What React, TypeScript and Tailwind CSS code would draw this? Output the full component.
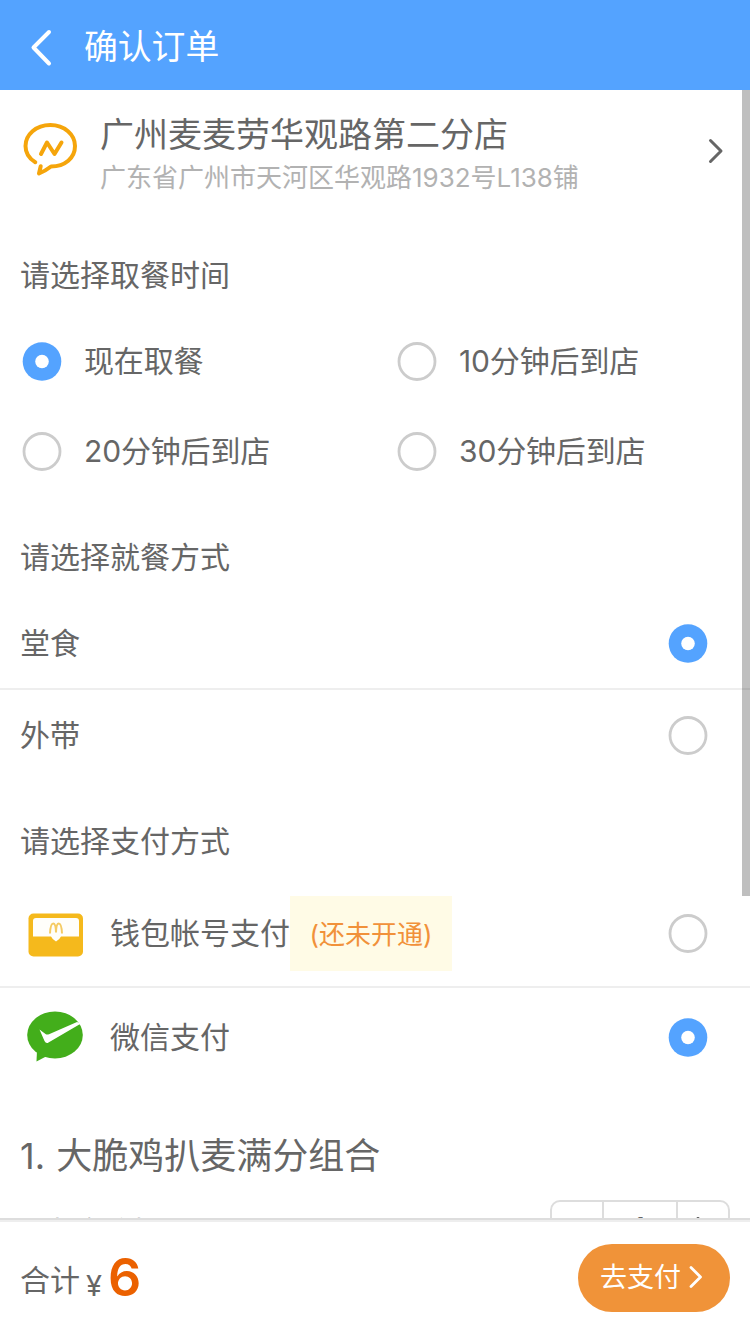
import React from "react";

function Radio({ checked = false }: { checked?: boolean }) {
  return (
    <svg width="40" height="40" viewBox="0 0 40 40" className="shrink-0">
      {checked ? (
        <>
          <circle cx="20" cy="20.500" r="19.3" fill="#54a3ff" />
          <circle cx="20" cy="20.500" r="6.8" fill="#fff" />
        </>
      ) : (
        <circle cx="20" cy="20.500" r="18" fill="#fff" stroke="#ccc" strokeWidth="2.800" />
      )}
    </svg>
  );
}

function SectionTitle({ children, className }: { children: React.ReactNode; className: string }) {
  return <h2 className={`px-5 text-[30px] leading-[40px] ${className}`}>{children}</h2>;
}

function TimeOption({ label, checked }: { label: string; checked?: boolean }) {
  return (
    <div className="flex h-[90px] w-[375px] items-center pl-[22px]">
      <Radio checked={checked} />
      <span className="ml-[22px] text-[30px] leading-[40px] tracking-[-0.150px]">{label}</span>
    </div>
  );
}

function WalletIcon() {
  return (
    <svg width="56" height="44" viewBox="0 0 56 44" className="mt-[3px]">
      <rect x="0.5" y="0.5" width="54.5" height="43" rx="5" fill="#f5b91c" />
      <path d="M5 8Q5 5 8 5H48Q51 5 51 8V23.500H33Q32 26 28 28.500Q24 26 23 23.500H5Z" fill="#fffefa" />
      <path d="M22 20.500Q22.500 10.500 25.200 10.500Q27.800 10.500 28 19.500Q28.200 10.500 30.800 10.500Q33.500 10.500 34 20.500" fill="none" stroke="#f5cb63" strokeWidth="2" />
    </svg>
  );
}

function WechatPayIcon() {
  return (
    <svg width="58" height="52" viewBox="0 0 58 52">
      <ellipse cx="28" cy="24" rx="27.800" ry="23.500" fill="#43ae1b" />
      <path d="M10 39L9.500 50.500L20 45Z" fill="#43ae1b" />
      <path d="M12.500 18.500L18.500 23Q20 24 22 23.200L50 11L54 12.500L21.500 31.500Q19 33 17.500 30Z" fill="#fff" />
    </svg>
  );
}

export default function App() {
  return (
    <div className="relative flex h-[1334px] w-[750px] flex-col overflow-hidden bg-white font-['Inter','Noto_Sans_CJK_SC',sans-serif] text-[#666]">
      <header className="flex h-[90px] shrink-0 items-center bg-[#54a3ff] pl-[30px] text-white">
        <svg width="24" height="38" viewBox="0 0 24 38" fill="none" stroke="currentColor" strokeWidth="4" strokeLinecap="round" strokeLinejoin="round" className="mt-[5px]">
          <path d="M19 3L3.500 18.500L19 34.500" />
        </svg>
        <h1 className="ml-[30px] mt-[4px] text-[33.800px] leading-[44px]">确认订单</h1>
      </header>

      <main className="h-[1128px] overflow-hidden">
        <section className="flex h-[120px]">
          <svg width="56" height="56" viewBox="0 0 56 56" fill="none" stroke="#f5a50b" strokeWidth="4" strokeLinecap="round" strokeLinejoin="round" className="ml-[22px] mt-[32px]">
            <path d="M13.300 40.200C7 36.500 3.500 30.500 3.500 24C3.500 12.500 14 3 28.300 3C42.500 3 53 12.500 53 24C53 36 43 44.500 29 44.500Q24 48.500 17 51.500L18.700 44.200" />
            <path d="M19 32L25 20.500L32.500 32L39.500 20.500" />
          </svg>
          <div className="ml-[22px] mt-[24px] flex-1">
            <h2 className="text-[34px] leading-[42px]">广州麦麦劳华观路第二分店</h2>
            <p className="pt-px text-[26px] leading-[42px] text-[#b2b2b2]">广东省广州市天河区华观路1932号L138铺</p>
          </div>
          <svg width="18" height="28" viewBox="0 0 18 28" fill="none" stroke="currentColor" strokeWidth="3" strokeLinecap="round" strokeLinejoin="round" className="mr-[25px] mt-[47px]">
            <path d="M3.500 3.500L14 14L3.500 24.500" />
          </svg>
        </section>

        <section>
          <SectionTitle className="h-[106px] pt-[45px]">请选择取餐时间</SectionTitle>
          <div className="flex flex-wrap">
            <TimeOption label="现在取餐" checked />
            <TimeOption label="10分钟后到店" />
            <TimeOption label="20分钟后到店" />
            <TimeOption label="30分钟后到店" />
          </div>
        </section>

        <section>
          <SectionTitle className="h-[102px] pt-[41px]">请选择就餐方式</SectionTitle>
          <div className="flex h-[92px] items-center justify-between border-b-2 border-[#eee] pl-5 pr-[42px] text-[30px]">
            堂食
            <Radio checked />
          </div>
          <div className="flex h-[92px] items-center justify-between pb-[2px] pl-5 pr-[42px] text-[30px]">
            外带
            <Radio />
          </div>
        </section>

        <section>
          <SectionTitle className="h-[98px] pt-[39px]">请选择支付方式</SectionTitle>
          <div className="flex h-[108px] items-center border-b-2 border-[#eee] pl-[28px] pr-[42px]">
            <WalletIcon />
            <span className="ml-[26px] text-[30px]">钱包帐号支付</span>
            <span className="flex h-[75px] w-[162px] items-center justify-center bg-[#fffbe6] pt-[3px] text-[26px] text-[#f1913a]">(还未开通)</span>
            <span className="ml-auto">
              <Radio />
            </span>
          </div>
          <div className="flex h-[100px] items-center pb-[2px] pl-[27px] pr-[42px]">
            <WechatPayIcon />
            <span className="ml-[25px] text-[30px]">微信支付</span>
            <span className="ml-auto">
              <Radio checked />
            </span>
          </div>
        </section>

        <section className="px-5 pt-[44px]">
          <h3 className="text-[36px] leading-[48px] [word-spacing:1px]">1. 大脆鸡扒麦满分组合</h3>
          <div className="mt-[20px] flex items-start justify-between">
            <span className="pt-[12px] text-[30px] leading-[40px]">- 大脆鸡扒</span>
            <div className="flex h-[56px] w-[180px] rounded-[10px] border-2 border-[#ddd] text-[30px] leading-none">
              <span className="flex w-[50px] items-center justify-center">
                <svg width="22" height="22" viewBox="0 0 22 22" stroke="#ccc" strokeWidth="2.500">
                  <path d="M1 11H21" />
                </svg>
              </span>
              <span className="flex w-[76px] items-center justify-center border-x-2 border-[#ddd] pr-[2px]">1</span>
              <span className="flex flex-1 items-center justify-center pr-[10px]">
                <svg width="22" height="22" viewBox="0 0 22 22" stroke="currentColor" strokeWidth="2.500">
                  <path d="M1 11H21M11 0V22" />
                </svg>
              </span>
            </div>
          </div>
        </section>
      </main>

      <footer className="flex h-[116px] shrink-0 items-center border-t-2 border-[#ddd] px-5 shadow-[inset_0_2px_0_#eee]">
        <div className="flex items-baseline pt-[2px]">
          <span className="relative -top-[5px] text-[30px]">合计</span>
          <span className="ml-[6px] text-[29px] leading-[40px]">¥</span>
          <span className="ml-[6px] text-[52px] font-semibold leading-[60px] text-[#eb6100]">6</span>
        </div>
        <button className="ml-auto mt-[2px] flex h-[68px] w-[152px] items-center rounded-full bg-[#f09339] pl-[22px] text-[27px] text-white">
          去支付
          <svg width="16" height="24" viewBox="0 0 16 24" fill="none" stroke="currentColor" strokeWidth="2.800" strokeLinecap="round" strokeLinejoin="round" className="-mt-[2px] ml-[7px]">
            <path d="M3 2.500L12.500 12L3 21.500" />
          </svg>
        </button>
      </footer>

      <div className="absolute right-0 top-[90px] h-[806px] w-2 bg-black/25" />
    </div>
  );
}
